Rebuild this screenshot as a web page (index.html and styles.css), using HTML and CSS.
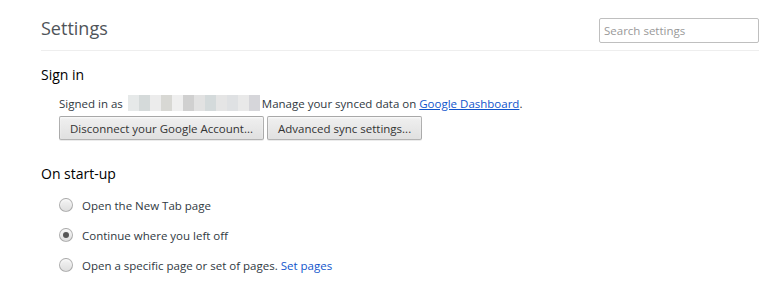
FILE: index.html
```html
<!DOCTYPE html>
<html lang="en">
<head>
  <meta charset="UTF-8" />
  <title>Settings</title>
  <link rel="stylesheet" href="styles.css">
</head>
<body>
  <div class="page">
    <header class="page-header">
      <h1>Settings</h1>
      <input class="search" type="search" placeholder="Search settings" />
    </header>

    <!-- SIGN IN -->
    <section class="group">
      <h3>Sign in</h3>
      <div class="sync-line">
        <span>Signed in as</span>
        <span class="blurred">
          <i style="background:#e6e9e9"></i><i style="background:#d5dada"></i><i style="background:#ececec"></i><i style="background:#d8d8d4"></i><i style="background:#efefef"></i><i style="background:#d0d0d0"></i><i style="background:#e2e2e2"></i><i style="background:#d4dadb"></i><i style="background:#e5e5e5"></i><i style="background:#dfe1e3"></i><i style="background:#e9e9e9"></i><i style="background:#d6d6da"></i>
        </span>
        <span>Manage your synced data on <a href="#">Google Dashboard</a>.</span>
      </div>
      <div class="buttons">
        <button>Disconnect your Google Account...</button>
        <button>Advanced sync settings...</button>
      </div>
    </section>

    <!-- START-UP -->
    <section class="group">
      <h3>On start-up</h3>
      <label class="radio"><span class="dot"></span>Open the New Tab page</label>
      <label class="radio checked"><span class="dot"></span>Continue where you left off</label>
      <label class="radio"><span class="dot"></span>Open a specific page or set of pages.&nbsp;<a class="plain" href="#">Set pages</a></label>
    </section>
  </div>
</body>
</html>
```

FILE: styles.css
```css
:root {
  --text: #303942;
  --title: #4f5459;
  --link: #15c;
  --ui: 'Open Sans', 'Noto Sans', sans-serif;
}
* { margin:0; padding:0; box-sizing:border-box; }
body { background:#fff; color:var(--text); font-family:var(--ui); font-size:11.5px; }
a { color:var(--link); }
a.plain { text-decoration:none; }

.page { padding:0 13px 0 41px; }

/* HEADER */
.page-header {
  display:flex; justify-content:space-between; align-items:flex-start;
  height:51px; padding-top:18px; border-bottom:1px solid #eee;
}
h1 { font-size:18px; font-weight:normal; color:var(--title); line-height:22px; margin-top:-1px; }
.search {
  width:160px; height:25px; border:1px solid #bfbfbf; border-radius:2px;
  padding:0 4px; font-family:var(--ui); font-size:11.5px; color:var(--text); outline:none;
}
.search::placeholder { color:#999; }

/* GROUPS */
.group { padding-top:15px; }
h3 { font-size:14px; font-weight:normal; color:#000; line-height:18px; margin-bottom:10px; }
.group + .group { padding-top:25px; }
.group + .group h3 { margin-bottom:7px; }

.sync-line { display:flex; align-items:center; height:18px; padding-left:18px; }
.blurred { display:flex; height:16px; margin:0 2px 0 5px; }
.blurred i { display:block; width:11px; height:100%; }

.buttons { display:flex; gap:3px; padding-left:18px; margin-top:4px; }
button {
  height:24px; padding:0 10px; font-family:var(--ui); font-size:11.5px; color:#333;
  background:linear-gradient(#f0f0f0, #e0e0e0); border:1px solid rgba(0,0,0,0.25);
  border-radius:2px; box-shadow:0 1px 0 rgba(0,0,0,0.08), inset 0 1px 2px rgba(255,255,255,0.75);
}

/* RADIOS */
.radio { display:flex; align-items:center; height:30px; padding-left:18px; }
.dot {
  width:14px; height:14px; margin-right:9px; border-radius:50%;
  border:1px solid rgba(0,0,0,0.25); background:linear-gradient(#f4f4f4, #dedede);
  box-shadow:inset 0 1px 2px rgba(255,255,255,0.75);
  display:flex; align-items:center; justify-content:center;
}
.radio.checked .dot::after { content:''; width:6px; height:6px; border-radius:50%; background:#555; }
```
